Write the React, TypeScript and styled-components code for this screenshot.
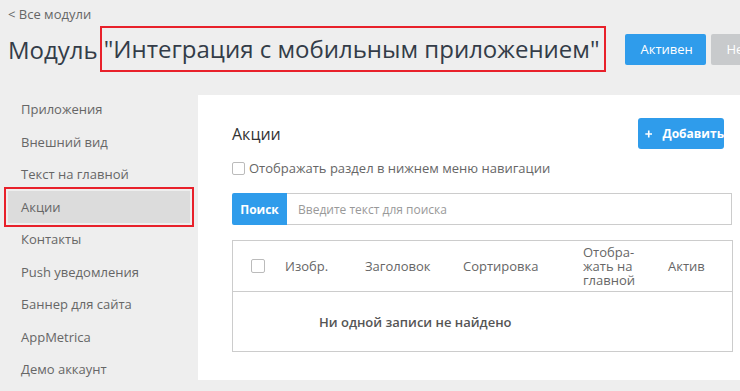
import React from 'react'
import styled, { createGlobalStyle } from 'styled-components'

const GlobalStyle = createGlobalStyle`
  html, body {
    margin: 0;
    padding: 0;
    background: #eeeeee;
    font-family: "Open Sans", "Noto Sans", sans-serif;
    overflow: hidden;
  }
  * { box-sizing: border-box; }
`

const Page = styled.div`
  width: 740px;
  height: 391px;
  overflow: hidden;
  background: #eeeeee;
`

const BackLink = styled.a`
  display: block;
  padding: 5px 0 0 8px;
  height: 24px;
  font-size: 13px;
  line-height: 18px;
  color: #666;
  text-decoration: none;
`

const TitleRow = styled.div`
  display: flex;
  align-items: center;
  height: 48px;
  padding-left: 8px;
  margin-top: 1px;
  white-space: nowrap;
`

const Title = styled.h1`
  margin: 0;
  font-size: 24px;
  font-weight: 400;
  color: #333c48;
  display: flex;
  align-items: center;
`

const Marked = styled.span`
  border: 2px solid #e8202a;
  padding: 5px 4px 5px 2px;
  margin-left: 2px;
  line-height: 32px;
`

const HeadButton = styled.button<{ $grey?: boolean }>`
  flex: none;
  height: 31px;
  padding: 0 16px;
  margin-left: ${(p) => (p.$grey ? '5px' : '19px')};
  border: none;
  border-radius: 2px;
  background: ${(p) => (p.$grey ? '#c8cacc' : '#2f9ceb')};
  color: #fff;
  font-family: inherit;
  font-size: 13px;
  width: ${(p) => (p.$grey ? '60px' : '81px')};
  text-align: ${(p) => (p.$grey ? 'left' : 'center')};
  overflow: hidden;
`

const Body = styled.div`
  display: flex;
  margin-top: 22px;
`

const Sidebar = styled.nav`
  width: 198px;
  flex: none;
  padding: 0 8px 0 8px;
  margin-top: -2px;
`

const NavItem = styled.div<{ $active?: boolean }>`
  height: 32.5px;
  display: flex;
  align-items: center;
  padding-left: 13px;
  width: 182px;
  font-size: 13px;
  color: #666;
  background: ${(p) => (p.$active ? '#dcdcdc' : 'transparent')};
  outline: ${(p) => (p.$active ? '2px solid #e8202a' : 'none')};
  outline-offset: 2px;
`

const Panel = styled.main`
  flex: 1;
  min-width: 0;
  background: #fff;
  height: 285px;
  padding: 23px 16px 0 34px;
`

const PanelHead = styled.div`
  display: flex;
  align-items: center;
  justify-content: space-between;
  height: 31px;
`

const PanelTitle = styled.h2`
  margin: 0;
  font-size: 16px;
  font-weight: 400;
  color: #333;
`

const AddButton = styled.button`
  display: flex;
  align-items: center;
  gap: 10px;
  height: 31px;
  width: 86px;
  flex: none;
  padding: 0 0 0 7px;
  border: none;
  border-radius: 3px;
  background: #2f9ceb;
  color: #fff;
  font-family: inherit;
  font-size: 12px;
  font-weight: 700;
`

const CheckRow = styled.label`
  display: flex;
  align-items: center;
  gap: 4px;
  margin-top: 11px;
  height: 16px;
  font-size: 13px;
  color: #666;
`

const Box = styled.span`
  width: 13px;
  height: 13px;
  border: 1px solid #bbb;
  border-radius: 2px;
  background: #fff;
  flex: none;
`

const SearchRow = styled.div`
  display: flex;
  height: 32px;
  margin-top: 17px;
  width: 500px;
`

const SearchButton = styled.button`
  width: 55px;
  border: none;
  border-radius: 2px 0 0 2px;
  background: #2f9ceb;
  color: #fff;
  font-family: inherit;
  font-size: 12px;
  font-weight: 700;
`

const SearchInput = styled.div`
  flex: 1;
  border: 1px solid #ccc;
  border-left: none;
  display: flex;
  align-items: center;
  padding-left: 11px;
  font-size: 12px;
  color: #999;
`

const Table = styled.div`
  margin-top: 15px;
  width: 501px;
  border: 1px solid #ccc;
`

const HeadRow = styled.div`
  display: flex;
  align-items: center;
  height: 51px;
  border-bottom: 1px solid #ccc;
  font-size: 13px;
  color: #666;
`

const HeadCell = styled.div<{ $w: number; $pad?: number }>`
  width: ${(p) => p.$w}px;
  padding-left: ${(p) => p.$pad ?? 0}px;
  flex: none;
  line-height: 14px;
`

const EmptyRow = styled.div`
  height: 59px;
  display: flex;
  align-items: center;
  padding-left: 86px;
  font-size: 13px;
  font-weight: 600;
  color: #555;
`

const Plus = () => (
  <svg width="12" height="12" viewBox="0 0 12 12">
    <path d="M6 0.5v11M0.5 6h11" stroke="#fff" strokeWidth="2.6" />
  </svg>
)

const navItems = [
  'Приложения',
  'Внешний вид',
  'Текст на главной',
  'Акции',
  'Контакты',
  'Push уведомления',
  'Баннер для сайта',
  'AppMetrica',
  'Демо аккаунт',
]

export default function App() {
  return (
    <Page>
      <GlobalStyle />
      <BackLink href="#">&lt; Все модули</BackLink>
      <TitleRow>
        <Title>
          Модуль<Marked>"Интеграция с мобильным приложением"</Marked>
        </Title>
        <HeadButton>Активен</HeadButton>
        <HeadButton $grey>Не</HeadButton>
      </TitleRow>
      <Body>
        <Sidebar>
          {navItems.map((item) => (
            <NavItem key={item} $active={item === 'Акции'}>
              {item}
            </NavItem>
          ))}
        </Sidebar>
        <Panel>
          <PanelHead>
            <PanelTitle>Акции</PanelTitle>
            <AddButton>
              <Plus />
              Добавить
            </AddButton>
          </PanelHead>
          <CheckRow>
            <Box />
            Отображать раздел в нижнем меню навигации
          </CheckRow>
          <SearchRow>
            <SearchButton>Поиск</SearchButton>
            <SearchInput>Введите текст для поиска</SearchInput>
          </SearchRow>
          <Table>
            <HeadRow>
              <HeadCell $w={52} $pad={18}>
                <Box style={{ display: 'block', width: 14, height: 14 }} />
              </HeadCell>
              <HeadCell $w={80}>Изобр.</HeadCell>
              <HeadCell $w={98}>Заголовок</HeadCell>
              <HeadCell $w={120}>Сортировка</HeadCell>
              <HeadCell $w={85}>
                Отобра-
                <br />
                жать на
                <br />
                главной
              </HeadCell>
              <HeadCell $w={60}>Актив</HeadCell>
            </HeadRow>
            <EmptyRow>Ни одной записи не найдено</EmptyRow>
          </Table>
        </Panel>
      </Body>
    </Page>
  )
}
